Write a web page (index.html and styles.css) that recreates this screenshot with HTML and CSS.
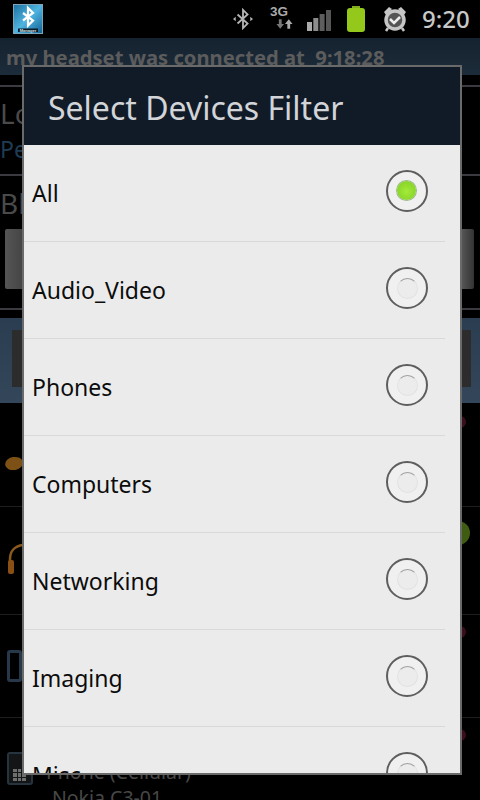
FILE: index.html
```html
<!DOCTYPE html>
<html lang="en">
<head>
<meta charset="utf-8">
<title>Select Devices Filter</title>
<link rel="stylesheet" href="styles.css">
</head>
<body>
<div class="screen">
  <header class="status">
    <svg class="app-icon" viewBox="0 0 30 30" width="30" height="30">
      <defs><linearGradient id="ag" x1="0" y1="0" x2="1" y2="1"><stop offset="0" stop-color="#1c6f9e"/><stop offset=".5" stop-color="#4fb4e0"/><stop offset="1" stop-color="#0f5f90"/></linearGradient></defs>
      <rect x=".5" y=".5" width="29" height="29" fill="url(#ag)" stroke="#7fa6b8"/>
      <path d="M10 9 L20 16.500 L15 21.500 V4 L20 9 L10 16.500" fill="none" stroke="#fff" stroke-width="2.200"/>
      <rect x="5" y="24.500" width="20" height="3.500" fill="#0a1c28"/>
      <text x="15" y="27.500" font-size="4" font-weight="700" text-anchor="middle" fill="#d8e4ea" font-family="Liberation Sans">Manager</text>
    </svg>
    <div class="status-icons">
      <svg class="ic-bt" viewBox="0 0 22 24" width="20" height="22"><path d="M5 7 L16 17 L11 22 V2 L16 7 L5 17" fill="none" stroke="#b5b5b5" stroke-width="2"/><path d="M0 12 l3-2.500 v5z M22 12 l-3-2.500 v5z" fill="#b5b5b5"/></svg>
      <div class="net">
        <span class="net-label">3G</span>
        <svg viewBox="0 0 18 10" width="17" height="10"><path d="M3 0h3v5h2.500L4.500 10 .5 5H3z" fill="#777"/><path d="M12 10h3V5h2.500L13.500 0 9.500 5H12z" fill="#aaa"/></svg>
      </div>
      <svg class="ic-signal" viewBox="0 0 24 22" width="24" height="22"><rect x="0" y="13" width="5" height="9" fill="#aaa"/><rect x="6.300" y="9" width="5" height="13" fill="#8c8c8c"/><rect x="12.600" y="5" width="5" height="17" fill="#5e5e5e"/><rect x="19" y="1" width="5" height="21" fill="#565656"/></svg>
      <svg class="ic-batt" viewBox="0 0 20 26" width="20" height="26"><rect x="6" y="0" width="8" height="3" fill="#7fae1c"/><rect x="1" y="2" width="18" height="24" rx="3" fill="#94c81a"/></svg>
      <svg class="ic-alarm" viewBox="0 0 24 26" width="24" height="26"><circle cx="12" cy="14" r="9" fill="#555" stroke="#c6c6c6" stroke-width="3.500"/><path d="M1 6 L6 1 L9 3 L3 9z M23 6 L18 1 L15 3 L21 9z" fill="#c6c6c6"/><path d="M7 13 l4 4 l6 -6" fill="none" stroke="#eee" stroke-width="2.500"/><path d="M5 22 l-2 3 M19 22 l2 3" stroke="#c6c6c6" stroke-width="2.500"/></svg>
      <span class="clock">9:20</span>
    </div>
  </header>
  <div class="ticker">my headset was connected at&nbsp; 9:18:28</div>
  <main class="back">
    <section class="block local">
      <div class="heading">Local</div>
      <div class="subheading">Pe</div>
    </section>
    <section class="block bluetooth">
      <div class="heading">Bluetooth</div>
      <div class="wide-button"></div>
    </section>
    <section class="band"><div class="band-button"></div></section>
    <div class="row row-a"><span class="blob"></span><span class="dot red"></span></div>
    <div class="row row-b">
      <svg class="headset" viewBox="0 0 16 32" width="16" height="32"><path d="M3 26 V16 C3 8 8 3 16 2" fill="none" stroke="#8a5a1c" stroke-width="2.500"/><rect x="1" y="17" width="6" height="14" rx="2" fill="#8a4f14"/></svg>
      <span class="dot green"></span>
    </div>
    <div class="row row-c"><span class="handset"></span><span class="dot red"></span></div>
    <div class="row row-d">
      <span class="keypad"><i></i><i></i><i></i><i></i><i></i><i></i><i></i><i></i><i></i></span>
      <div class="device"><div class="device-type">Phone (Cellular)</div><div class="device-name">Nokia C3-01</div></div>
      <span class="dot red"></span>
    </div>
  </main>
  <div class="dialog">
    <h1 class="dialog-title">Select Devices Filter</h1>
    <ul class="options">
      <li class="option"><span class="label">All</span><span class="radio on"></span></li>
      <li class="option"><span class="label">Audio_Video</span><span class="radio"></span></li>
      <li class="option"><span class="label">Phones</span><span class="radio"></span></li>
      <li class="option"><span class="label">Computers</span><span class="radio"></span></li>
      <li class="option"><span class="label">Networking</span><span class="radio"></span></li>
      <li class="option"><span class="label">Imaging</span><span class="radio"></span></li>
      <li class="option"><span class="label">Misc</span><span class="radio"></span></li>
    </ul>
  </div>
</div>
</body>
</html>
```
FILE: styles.css
```css
* { box-sizing: border-box; }
html, body { margin: 0; padding: 0; background: #000; }
.screen {
  position: relative;
  width: 480px;
  height: 800px;
  overflow: hidden;
  background: #000;
  font-family: "Noto Sans", "Open Sans", sans-serif;
}
.status {
  height: 38px;
  background: #000;
  display: flex;
  align-items: center;
  justify-content: space-between;
  padding: 0 11px 0 13px;
}
.app-icon { display: block; }
.status-icons { display: flex; align-items: center; }
.ic-bt { margin-right: 16px; }
.net { width: 24px; display: flex; flex-direction: column; align-items: flex-end; margin-right: 14px; margin-top: -2px; gap: 2px; }
.net-label { font: bold 13.500px/10px "Liberation Sans", sans-serif; color: #aaa; width: 23px; }
.ic-signal { margin-right: 15px; margin-top: 1px; }
.ic-batt { margin-right: 17px; }
.ic-alarm { margin-right: 15px; }
.clock { color: #c8c8c8; font-size: 24px; font-weight: 500; line-height: 30px; width: 47px; }
.ticker {
  height: 37px;
  background: linear-gradient(#15222f, #1d2c3a);
  color: #5c5c5c;
  font-size: 20.200px;
  font-weight: 700;
  line-height: 38px;
  padding-left: 6px;
  white-space: pre;
}
.back { padding-top: 10px; }
.block { border-top: 2px solid #3a3a40; }
.local { height: 89px; }
.heading { color: #4a4a4a; font-size: 28px; line-height: 34px; padding: 9px 0 0 0; }
.subheading { color: #1f3c54; font-size: 23px; line-height: 28px; padding-top: 5px; }
.bluetooth { height: 134px; }
.bluetooth .heading { padding-top: 10px; line-height: 34px; }
.wide-button {
  height: 60px;
  margin: 9px 6px 0 5px;
  background: linear-gradient(90deg, #555 0, #444 4%, #626262 96.500%, #333 100%);
  border-radius: 2px;
}
.band {
  height: 95px;
  border-top: 2px solid #3a3a40;
  padding: 20px 9px 0 12px;
  background: linear-gradient(#000 0, #000 8px, #2b3d50 8px, #33465a 100%);
}
.band-button { height: 57px; background: #2c2c2c; }
.row {
  display: flex;
  align-items: flex-start;
  justify-content: space-between;
  padding: 0 14px 0 7px;
  border-bottom: 1px solid #1e1e1e;
}
.row-a { height: 104px; padding-left: 5px; }
.row-b { height: 108px; }
.row-c { height: 103px; }
.row-d { height: 90px; border-bottom: 0; }
.dot { width: 12px; height: 12px; border-radius: 50%; margin-top: 11px; }
.dot.red { background: #3a0e1c; }
.row-a .dot { margin-top: 13px; }
.dot.green { width: 24px; height: 24px; background: #3f5c12; margin: 14px -4px 0 0; }
.blob { width: 18px; height: 13px; border-radius: 50%; background: #7d5115; margin-top: 54px; transform: rotate(-10deg); }
.headset { margin-top: 36px; }
.handset { width: 15px; height: 32px; border: 3px solid #26384a; border-radius: 3px; margin-top: 35px; }
.keypad {
  flex: none;
  width: 26px;
  height: 33px;
  margin-top: 34px;
  padding: 15px 5px 2px 4px;
  border: 2px solid #26343f;
  border-radius: 3px;
  background: #131517;
  display: grid;
  grid-template-columns: repeat(3, 1fr);
  gap: 1px;
}
.keypad i { background: #6e6e6e; }
.device { flex: 1; margin: 41px 0 0 13px; line-height: 26px; font-size: 19.500px; color: #484848; }
.device-name { padding-left: 6px; }
.dialog {
  position: absolute;
  left: 22px;
  top: 65px;
  width: 440px;
  height: 710px;
  border: 2px solid #6a6a6a;
  background: #ebebeb;
  display: flex;
  flex-direction: column;
  overflow: hidden;
}
.dialog-title {
  flex: none;
  margin: 0;
  height: 78px;
  background: #111b27;
  color: #d2d4d8;
  font-size: 32px;
  font-weight: 400;
  line-height: 82px;
  padding-left: 24px;
}
.options { list-style: none; margin: 0; padding: 0; overflow: hidden; flex: 1; }
.option {
  position: relative;
  height: 97px;
  display: flex;
  align-items: center;
  justify-content: space-between;
  padding: 0 32px 4px 8px;
  color: #0c0c0c;
}
.label { font-size: 23px; margin-top: 2px; }
.option::after {
  content: "";
  position: absolute;
  left: 0;
  right: 15px;
  bottom: 0;
  height: 1px;
  background: #d9d9d9;
}
.radio {
  position: relative;
  flex: none;
  width: 42px;
  height: 42px;
  margin-bottom: 2px;
  border: 2.500px solid #5e5e5e;
  border-radius: 50%;
  background: #f0f0f0;
}
.radio::after {
  content: "";
  position: absolute;
  left: 9px;
  top: 9px;
  width: 19px;
  height: 19px;
  border-radius: 50%;
  border: 1.500px solid #e2e2e2;
  border-top-color: #a0a0a0;
  background: #ececec;
}
.radio.on::after {
  border: 0;
  background: radial-gradient(circle at 50% 55%, #a4ea3a, #7ccc22);
  box-shadow: 0 0 0 1px #9bb98a;
}
```
